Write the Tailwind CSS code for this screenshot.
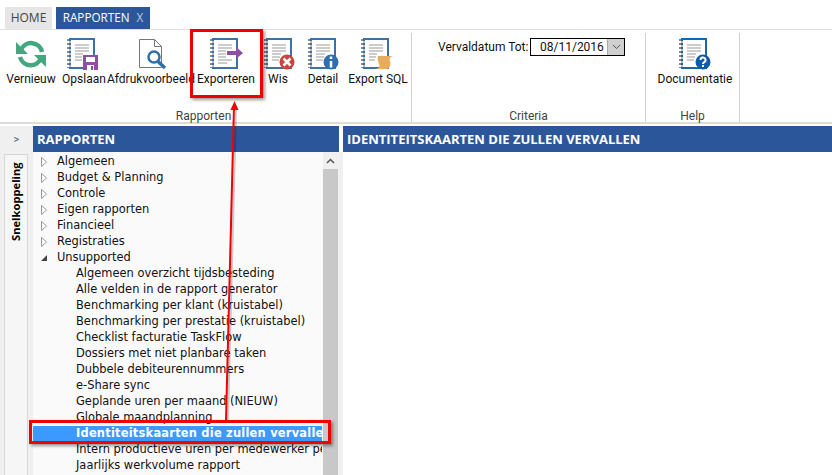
<!DOCTYPE html>
<html lang="en">
<head>
  <meta charset="UTF-8" />
  <title>Rapporten</title>
  <script src="https://cdn.jsdelivr.net/npm/@tailwindcss/browser@4"></script>
</head>
<body class="relative w-[832px] h-[475px] overflow-hidden bg-white text-[#111] font-['Roboto','Noto_Sans',sans-serif] text-[12px] leading-none">

  <!-- tabs -->
  <div class="flex items-end h-[30px] pl-[5px] gap-[4px] border-b border-[#e1e1e1]">
    <div class="w-[47px] h-[22px] bg-[#e6e6e6] text-[#444] flex items-center justify-center font-['Open_Sans',sans-serif]">HOME</div>
    <div class="w-[94px] h-[22px] bg-[#2b579a] text-white flex items-center justify-center gap-[7px] font-['Open_Sans',sans-serif] text-[11.700px]">RAPPORTEN <span class="text-[#b9c9e2]">X</span></div>
  </div>

  <!-- ribbon -->
  <div class="flex h-[94px] pt-[3px] border-b-2 border-[#dcdcdc]">
    <div class="w-[412px] border-r border-[#d2d0cc] flex flex-col">
      <div class="flex h-[75px] pl-[2px]">
        <div class="w-[58px] flex flex-col items-center pt-[4px] gap-[2px]">
          <svg width="34" height="34" viewBox="0 0 34 34" fill="none" stroke="#43a77f" stroke-width="4.500"><path d="M7 13a11 11 0 0 1 21 2"/><path d="M6 20a11 11 0 0 0 21 1"/><path fill="#43a77f" stroke="none" d="M2 5v12h12zM32 18H20l12 12z"/></svg>
          <span>Vernieuw</span>
        </div>
        <div class="w-[48px] flex flex-col items-center pt-[4px] gap-[2px]">
          <svg width="34" height="34" viewBox="0 0 34 34"><rect x="3" y="2" width="24" height="29" fill="#fff" stroke="#3d6fa8" stroke-width="2"/><path d="M1 2v29" stroke="#888" stroke-width="2" stroke-dasharray="2 2"/><path d="M3 4v27" stroke="#bbb" stroke-width="2" stroke-dasharray="2 2"/><path d="M8 8h14M8 11h14M8 14h14M8 17h8M8 20h7M8 23h7" stroke="#999"/><rect x="16" y="18" width="15" height="15" fill="#8e4fa3"/><rect x="19" y="20" width="9" height="5" fill="#fff"/><rect x="20" y="28" width="7" height="5" fill="#fff"/><rect x="24" y="29" width="2" height="4" fill="#8e4fa3"/></svg>
          <span>Opslaan</span>
        </div>
        <div class="w-[86px] flex flex-col items-center pt-[4px] gap-[2px]">
          <svg width="34" height="34" viewBox="0 0 34 34" fill="none"><path d="M5.500 2.500h15l7 7v21h-22z" fill="#fff" stroke="#777"/><path d="M20.500 2.500v7h7" stroke="#777"/><circle cx="20" cy="20" r="5.500" fill="#fff" stroke="#2f6fad" stroke-width="2.500"/><path d="M24 24.500l7 6.500" stroke="#2f6fad" stroke-width="3.500"/></svg>
          <span>Afdrukvoorbeeld</span>
        </div>
        <div class="w-[64px] flex flex-col items-center pt-[4px] gap-[2px]">
          <svg width="34" height="34" viewBox="0 0 34 34"><rect x="4" y="2" width="24" height="29" fill="#fff" stroke="#3d6fa8" stroke-width="2"/><path d="M2 2v29" stroke="#888" stroke-width="2" stroke-dasharray="2 2"/><path d="M4 4v27" stroke="#bbb" stroke-width="2" stroke-dasharray="2 2"/><path d="M9 8h14M9 11h14M9 14h8M9 17h8M9 20h8M9 23h14M9 26h9" stroke="#999"/><path d="M18 14h9v-4l7 6-7 6v-4h-9z" fill="#8e4fa3"/></svg>
          <span>Exporteren</span>
        </div>
        <div class="w-[40px] flex flex-col items-center pt-[4px] gap-[2px]">
          <svg width="34" height="34" viewBox="0 0 34 34"><rect x="6" y="2" width="24" height="29" fill="#fff" stroke="#3d6fa8" stroke-width="2"/><path d="M4 2v29" stroke="#888" stroke-width="2" stroke-dasharray="2 2"/><path d="M6 4v27" stroke="#bbb" stroke-width="2" stroke-dasharray="2 2"/><path d="M11 8h14M11 11h14M11 14h14M11 17h9M11 20h8M11 23h7" stroke="#999"/><circle cx="26" cy="25" r="7.500" fill="#c8453b"/><path d="M22.500 21.500l7 7M29.500 21.500l-7 7" stroke="#fff" stroke-width="2.500"/></svg>
          <span>Wis</span>
        </div>
        <div class="w-[50px] flex flex-col items-center pt-[4px] gap-[2px]">
          <svg width="34" height="34" viewBox="0 0 34 34"><rect x="5" y="2" width="24" height="29" fill="#fff" stroke="#3d6fa8" stroke-width="2"/><path d="M3 2v29" stroke="#888" stroke-width="2" stroke-dasharray="2 2"/><path d="M5 4v27" stroke="#bbb" stroke-width="2" stroke-dasharray="2 2"/><path d="M10 8h14M10 11h14M10 14h14M10 17h9M10 20h8M10 23h7" stroke="#999"/><circle cx="25" cy="25" r="7.500" fill="#2f6fb0"/><path d="M25 24v6.500M25 19.500v2.500" stroke="#fff" stroke-width="2.500"/></svg>
          <span>Detail</span>
        </div>
        <div class="w-[60px] flex flex-col items-center pt-[4px] gap-[2px]">
          <svg width="34" height="34" viewBox="0 0 34 34"><rect x="3" y="2" width="24" height="29" fill="#fff" stroke="#3d6fa8" stroke-width="2"/><path d="M1 2v29" stroke="#888" stroke-width="2" stroke-dasharray="2 2"/><path d="M3 4v27" stroke="#bbb" stroke-width="2" stroke-dasharray="2 2"/><path d="M8 8h14M8 11h14M8 14h14M8 17h8M8 20h7M8 23h6" stroke="#999"/><path d="M17 19h15c-3 1-4 2-3 5s0 7-3 8H15c3-1 4-2 3-5s-2-6-1-8z" fill="#e8ac5c"/></svg>
          <span>Export SQL</span>
        </div>
      </div>
      <div class="pr-[4px] pt-[3px] text-center text-[#444]">Rapporten</div>
    </div>

    <div class="w-[234px] border-r border-[#d2d0cc] flex flex-col">
      <div class="h-[75px] flex items-start pt-[5px] pl-[26px] gap-[4px]">
        <span class="w-[88px] pt-[3px] whitespace-nowrap">Vervaldatum Tot:</span>
        <div class="w-[95px] h-[18px] border border-black flex items-center">
          <span class="flex-1 pl-[9px]">08/11/2016</span>
          <div class="w-[17px] h-[16px] bg-[#cfcfcf] border-l border-[#aaa] flex items-center justify-center">
            <svg width="9" height="6" viewBox="0 0 9 6" fill="none" stroke="#555"><path d="M1 1l3.500 3.500L8 1"/></svg>
          </div>
        </div>
      </div>
      <div class="pt-[3px] text-center text-[#444]">Criteria</div>
    </div>

    <div class="w-[94px] border-r border-[#d2d0cc] flex flex-col">
      <div class="h-[75px] flex flex-col items-center pl-[5px] pt-[4px] gap-[2px]">
        <svg width="34" height="34" viewBox="0 0 34 34"><rect x="4" y="2" width="24" height="29" fill="#fff" stroke="#1565b0" stroke-width="2"/><path d="M2 2v29" stroke="#888" stroke-width="2" stroke-dasharray="2 2"/><path d="M4 4v27" stroke="#bbb" stroke-width="2" stroke-dasharray="2 2"/><path d="M9 8h14M9 11h14M9 14h14M9 17h9M9 20h8M9 23h7" stroke="#999"/><circle cx="25" cy="25" r="7.500" fill="#0f5ba8"/><path d="M22.500 23a2.500 2.500 0 1 1 3.500 2.300c-.8.400-1 .9-1 1.700M25 28v2" fill="none" stroke="#fff" stroke-width="2"/></svg>
        <span>Documentatie</span>
      </div>
      <div class="pt-[3px] text-center text-[#444]">Help</div>
    </div>
  </div>

  <!-- main -->
  <div class="flex h-[351px] mt-[2px]">
    <!-- side rail -->
    <div class="w-[33px] bg-[#f0f0f0] flex flex-col">
      <div class="h-[26px] flex items-center justify-center text-[#555] text-[11px]">&gt;</div>
      <div class="flex-1 ml-[4px] w-[24px] mt-[2px] bg-[#f6f6f6] border-x border-t border-[#d6d6d6] flex justify-center pt-[6px]">
        <span class="[writing-mode:vertical-rl] rotate-180 h-[80px] font-['Open_Sans',sans-serif] font-bold text-[11.200px] text-black">Snelkoppeling</span>
      </div>
    </div>

    <!-- tree -->
    <div class="w-[306px] flex flex-col">
      <div class="h-[26px] bg-[#2b579a] text-white font-['Open_Sans',sans-serif] font-bold text-[13px] flex items-center pl-[4px]">RAPPORTEN</div>
      <div class="flex flex-1 font-['DejaVu_Sans',sans-serif] text-[11.450px] bg-[#fafafa]">
        <div class="w-[290px] pr-[1px] overflow-hidden pt-[2px] whitespace-nowrap">
          <div class="h-[16px] flex items-center"><svg class="ml-[8px] mr-[10px]" width="6" height="10" viewBox="0 0 6 10" fill="#fff" stroke="#999"><path d="M.5.500l5 4.500-5 4.500z"/></svg>Algemeen</div>
          <div class="h-[16px] flex items-center"><svg class="ml-[8px] mr-[10px]" width="6" height="10" viewBox="0 0 6 10" fill="#fff" stroke="#999"><path d="M.5.500l5 4.500-5 4.500z"/></svg>Budget &amp; Planning</div>
          <div class="h-[16px] flex items-center"><svg class="ml-[8px] mr-[10px]" width="6" height="10" viewBox="0 0 6 10" fill="#fff" stroke="#999"><path d="M.5.500l5 4.500-5 4.500z"/></svg>Controle</div>
          <div class="h-[16px] flex items-center"><svg class="ml-[8px] mr-[10px]" width="6" height="10" viewBox="0 0 6 10" fill="#fff" stroke="#999"><path d="M.5.500l5 4.500-5 4.500z"/></svg>Eigen rapporten</div>
          <div class="h-[16px] flex items-center"><svg class="ml-[8px] mr-[10px]" width="6" height="10" viewBox="0 0 6 10" fill="#fff" stroke="#999"><path d="M.5.500l5 4.500-5 4.500z"/></svg>Financieel</div>
          <div class="h-[16px] flex items-center"><svg class="ml-[8px] mr-[10px]" width="6" height="10" viewBox="0 0 6 10" fill="#fff" stroke="#999"><path d="M.5.500l5 4.500-5 4.500z"/></svg>Registraties</div>
          <div class="h-[16px] flex items-center"><svg class="ml-[8px] mr-[10px]" width="6" height="10" viewBox="0 0 6 10" fill="#444"><path d="M6 2v6H0z"/></svg>Unsupported</div>
          <div class="h-[16px] flex items-center pl-[43px]">Algemeen overzicht tijdsbesteding</div>
          <div class="h-[16px] flex items-center pl-[43px]">Alle velden in de rapport generator</div>
          <div class="h-[16px] flex items-center pl-[43px]">Benchmarking per klant (kruistabel)</div>
          <div class="h-[16px] flex items-center pl-[43px]">Benchmarking per prestatie (kruistabel)</div>
          <div class="h-[16px] flex items-center pl-[43px]">Checklist facturatie TaskFlow</div>
          <div class="h-[16px] flex items-center pl-[43px]">Dossiers met niet planbare taken</div>
          <div class="h-[16px] flex items-center pl-[43px]">Dubbele debiteurennummers</div>
          <div class="h-[16px] flex items-center pl-[43px]">e-Share sync</div>
          <div class="h-[16px] flex items-center pl-[43px]">Geplande uren per maand (NIEUW)</div>
          <div class="h-[16px] flex items-center pl-[43px]">Globale maandplanning</div>
          <div class="h-[16px] flex items-center pl-[43px] bg-[#3d99ff] text-white font-bold tracking-[0.22px] overflow-hidden">Identiteitskaarten die zullen vervallen</div>
          <div class="h-[16px] flex items-center pl-[43px] overflow-hidden">Intern productieve uren per medewerker per maand</div>
          <div class="h-[16px] flex items-center pl-[43px]">Jaarlijks werkvolume rapport</div>
        </div>
        <div class="w-[15px] bg-[#c8c8c8]">
          <div class="h-[17px] bg-[#f0f0f0] flex items-center justify-center">
            <svg width="9" height="6" viewBox="0 0 9 6" fill="none" stroke="#555" stroke-width="1.500"><path d="M1 5l3.500-3.500L8 5"/></svg>
          </div>
        </div>
        <div class="w-[1px] bg-[#f0f0f0]"></div>
      </div>
    </div>

    <!-- strip between the panes -->
    <div class="w-[4px] bg-[#f0f0f0]"><div class="h-[26px] bg-white"></div></div>

    <!-- detail -->
    <div class="flex-1 flex flex-col">
      <div class="h-[26px] bg-[#2b579a] text-white font-['Open_Sans',sans-serif] font-bold text-[13px] flex items-center pl-[4px]">IDENTITEITSKAARTEN DIE ZULLEN VERVALLEN</div>
    </div>
  </div>

  <!-- red annotations drawn over the screenshot -->
  <div class="absolute left-[190px] top-[29px] w-[73px] h-[69px] border-[3px] border-[#f00000] shadow-[2px_2px_3px_rgba(0,0,0,0.4)]"></div>
  <div class="absolute left-[29px] top-[420px] w-[302px] h-[24px] border-[3px] border-[#f00000] shadow-[2px_2px_3px_rgba(0,0,0,0.4)]"></div>
  <svg class="absolute left-0 top-0" width="832" height="475" fill="none">
    <path d="M228 420L236 108" stroke="#000" stroke-opacity="0.2" stroke-width="2"/>
    <path d="M226 421L234 106" stroke="#f00000" stroke-width="2"/>
    <path d="M234.500 101l-4 9h8z" fill="#f00000"/>
  </svg>
</body>
</html>
